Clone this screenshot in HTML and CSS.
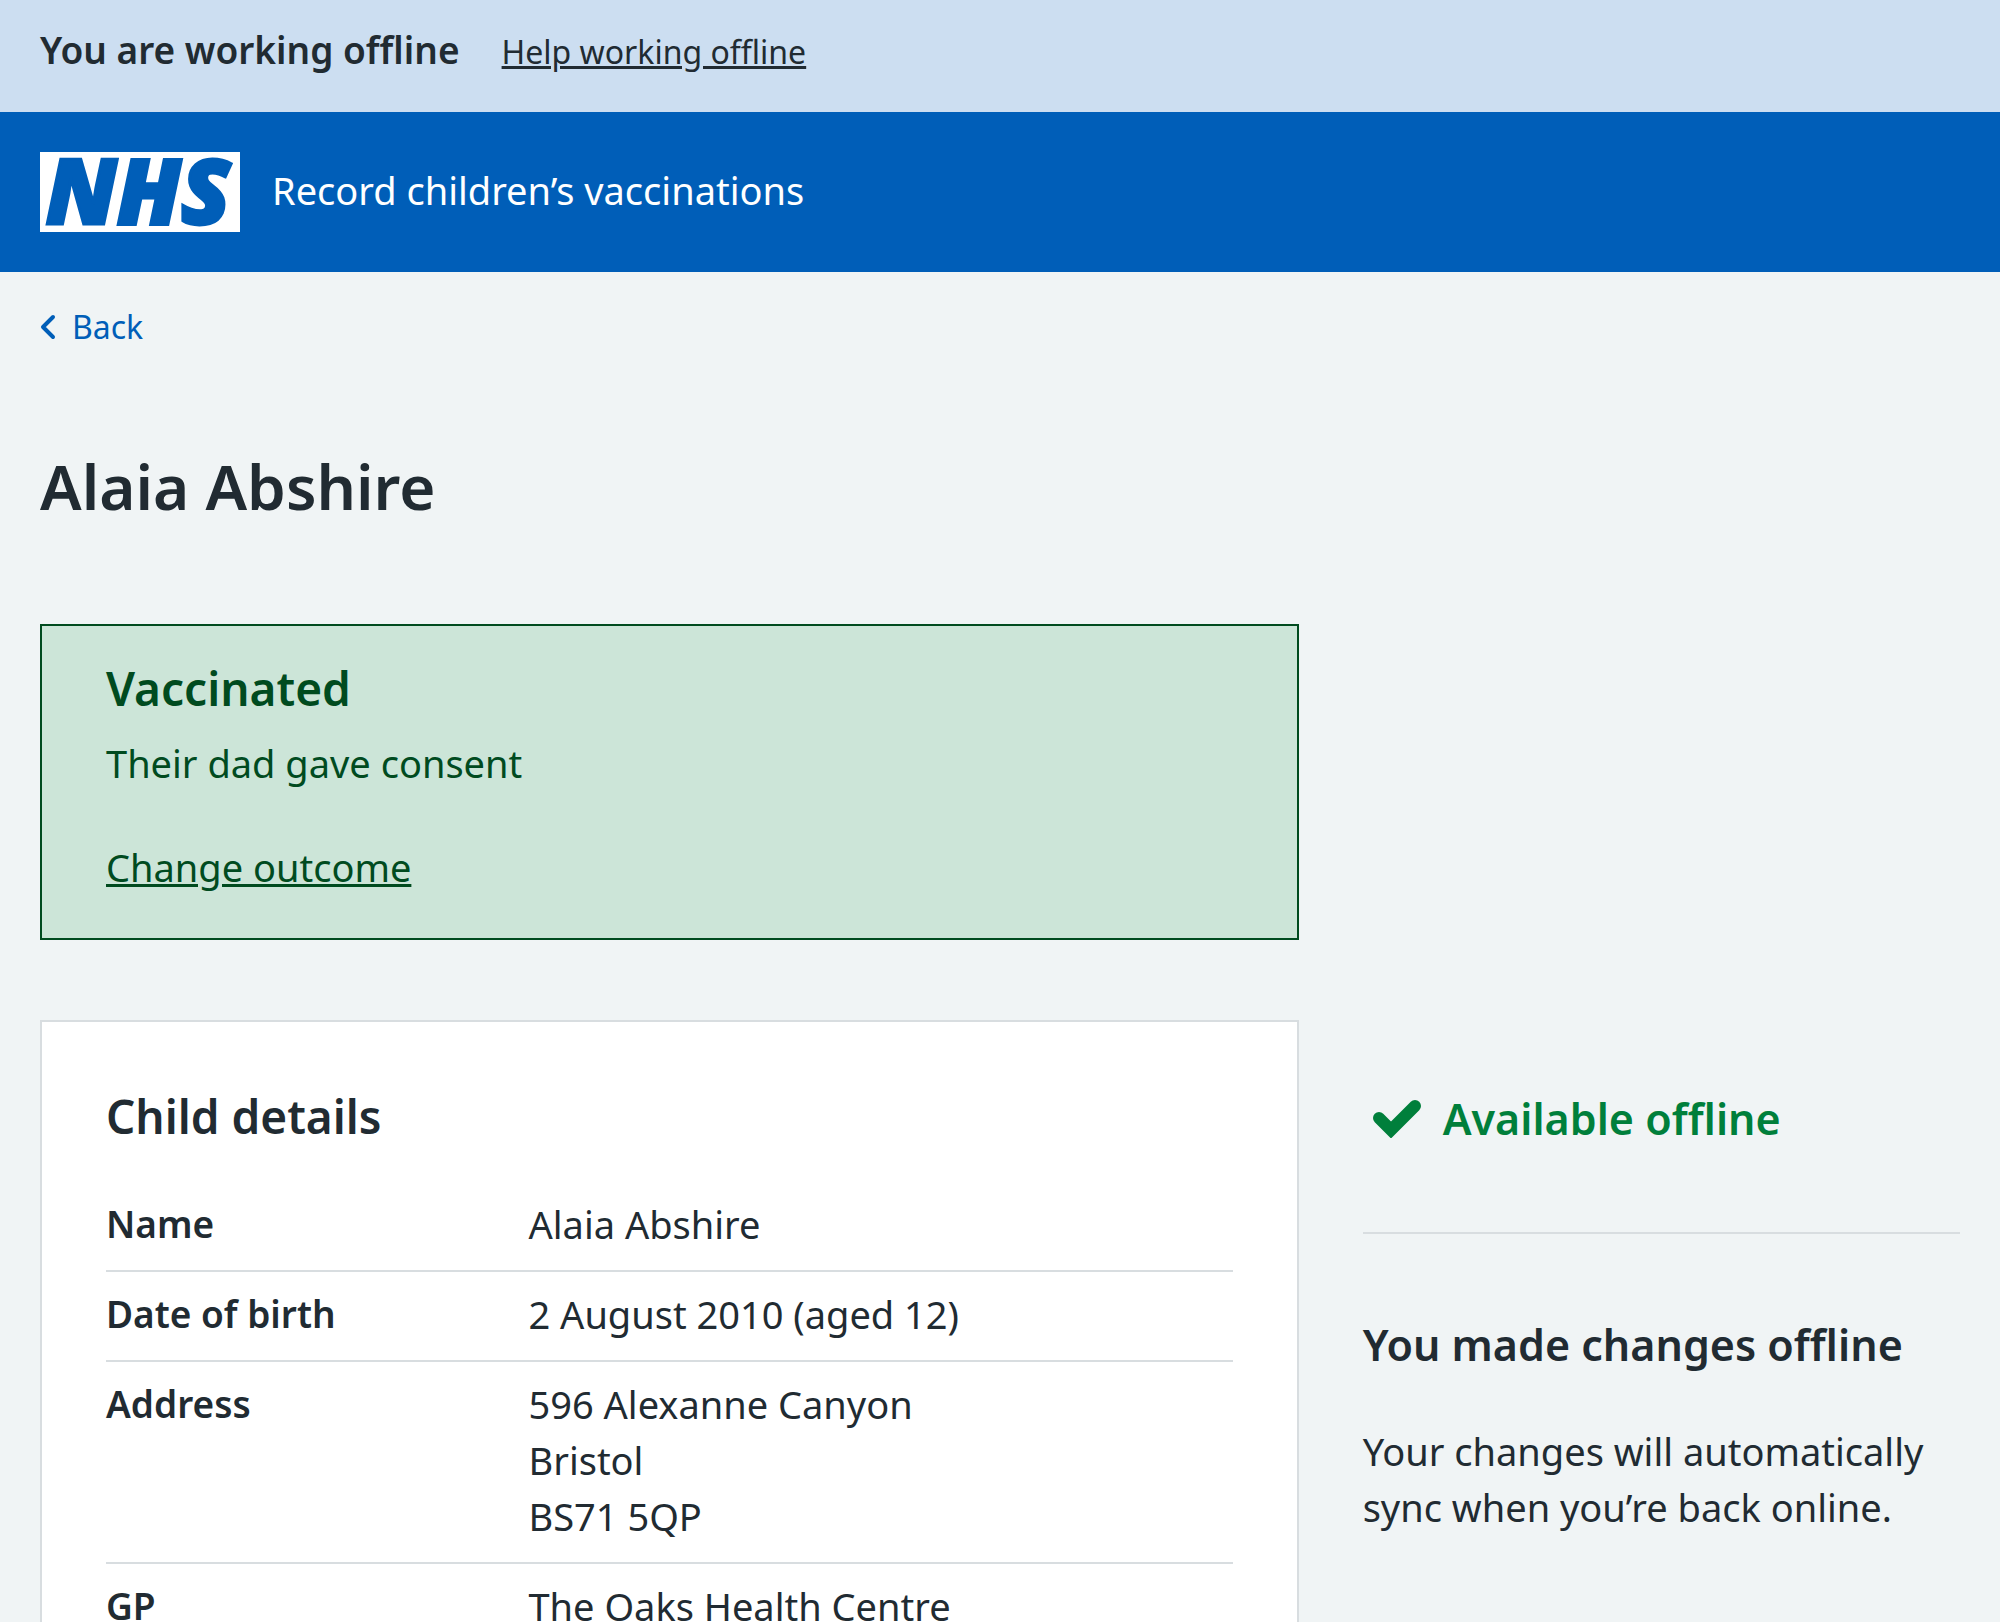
FILE: index.html
```html
<!DOCTYPE html>
<html lang="en">
<head>
  <meta charset="utf-8">
  <meta name="viewport" content="width=device-width, initial-scale=1">
  <title>Alaia Abshire – Record children’s vaccinations</title>
  <link rel="stylesheet" href="styles.css">
</head>
<body>
  <div class="offline-banner">
    <strong class="offline-banner__status">You are working offline</strong>
    <a class="offline-banner__link" href="#help">Help working offline</a>
  </div>

  <header class="header">
    <a class="header__link" href="#home">
      <svg class="header__logo" viewBox="0 0 200 80" role="img" aria-label="NHS">
        <rect width="200" height="80" fill="#fff"/>
        <text class="header__logo-text" x="98" y="72" text-anchor="middle">NHS</text>
      </svg>
      <span class="header__service">Record children’s vaccinations</span>
    </a>
  </header>

  <div class="container">
    <a class="back-link" href="#back">
      <svg class="back-link__icon" viewBox="0 0 16 26" aria-hidden="true">
        <path d="M13 3 3 13l10 10" fill="none" stroke="currentColor" stroke-width="4" stroke-linecap="round" stroke-linejoin="round"/>
      </svg>
      Back
    </a>

    <main class="main">
      <h1 class="page-title">Alaia Abshire</h1>

      <div class="layout">
        <section class="card card--success">
          <h2 class="card__heading">Vaccinated</h2>
          <p class="card__text">Their dad gave consent</p>
          <a class="card__link" href="#outcome">Change outcome</a>
        </section>

        <section class="card card--details">
          <h2 class="card__heading">Child details</h2>
          <dl class="summary">
            <div class="summary__row">
              <dt class="summary__key">Name</dt>
              <dd class="summary__value">Alaia Abshire</dd>
            </div>
            <div class="summary__row">
              <dt class="summary__key">Date of birth</dt>
              <dd class="summary__value">2 August 2010 (aged 12)</dd>
            </div>
            <div class="summary__row">
              <dt class="summary__key">Address</dt>
              <dd class="summary__value">596 Alexanne Canyon<br>Bristol<br>BS71 5QP</dd>
            </div>
            <div class="summary__row">
              <dt class="summary__key">GP</dt>
              <dd class="summary__value">The Oaks Health Centre</dd>
            </div>
          </dl>
        </section>

        <aside class="sidebar">
          <p class="availability">
            <svg class="availability__icon" viewBox="0 0 48 38" aria-hidden="true">
              <path d="M6 18 18 30 42 6" fill="none" stroke="currentColor" stroke-width="12" stroke-linecap="round"/>
            </svg>
            Available offline
          </p>
          <hr class="sidebar__rule">
          <h3 class="sidebar__heading">You made changes offline</h3>
          <p class="sidebar__text">Your changes will automatically sync when you’re back online.</p>
        </aside>
      </div>
    </main>
  </div>
</body>
</html>
```
FILE: styles.css
```css
* {
  box-sizing: border-box;
}

body {
  margin: 0;
  background: #f0f4f5;
  color: #212b32;
  font-family: "Noto Sans", "Open Sans", sans-serif;
  font-size: 38px;
  line-height: 56px;
}

h1, h2, h3, p, dl, dd {
  margin: 0;
}

h1, h2, h3, strong, dt {
  font-weight: 600;
}

a {
  color: inherit;
}

.offline-banner {
  display: flex;
  align-items: baseline;
  gap: 42px;
  padding: 22px 40px 32px;
  background: #ccdef1;
}

.offline-banner__status {
  font-size: 37px;
}

.offline-banner__link {
  font-size: 32px;
}

.header {
  padding: 40px;
  background: #005eb8;
  color: #fff;
}

.header__link {
  display: flex;
  align-items: center;
  gap: 32px;
  text-decoration: none;
}

.header__logo {
  width: 200px;
  height: 80px;
  overflow: visible;
}

.header__logo-text {
  fill: #005eb8;
  stroke: #005eb8;
  stroke-width: 3px;
  font-family: "Open Sans", sans-serif;
  font-size: 90px;
  font-style: italic;
  font-weight: 800;
}

.header__service {
  padding-bottom: 4px;
}

.container {
  padding: 27px 40px 0;
}

.back-link {
  display: flex;
  align-items: center;
  gap: 16px;
  width: fit-content;
  color: #005eb8;
  font-size: 32px;
  text-decoration: none;
}

.back-link__icon {
  width: 16px;
  height: 26px;
}

.page-title {
  margin: 91px 0 98px;
  font-size: 62px;
  line-height: 80px;
}

.layout {
  display: grid;
  grid-template-columns: repeat(3, 1fr);
  gap: 80px 64px;
}

.card {
  grid-column: span 2;
  border: 2px solid #d8dde0;
  padding: 62px 64px;
  background: #fff;
}

.card__heading {
  font-size: 46px;
  line-height: 64px;
}

.card--success {
  padding: 30px 64px 43px;
  border-color: #004b1f;
  background: #cce5d8;
  color: #004b1f;
}

.card__text {
  margin: 15px 0 48px;
}

.summary {
  margin-top: 34px;
}

.summary__row {
  display: grid;
  grid-template-columns: 3fr 5fr;
  padding: 14px 0 18px;
  border-bottom: 2px solid #d8dde0;
}

.summary__key {
  font-size: 37px;
}

.sidebar {
  padding-top: 71px;
}

.availability {
  display: flex;
  align-items: center;
  gap: 22px;
  padding-left: 10px;
  color: #007f3b;
  font-size: 43px;
  font-weight: 600;
}

.availability__icon {
  width: 48px;
  height: 38px;
}

.sidebar__rule {
  margin: 85px 0 83px;
  border: 0;
  border-top: 2px solid #d8dde0;
}

.sidebar__heading {
  font-size: 43px;
}

.sidebar__text {
  margin-top: 50px;
}
```
